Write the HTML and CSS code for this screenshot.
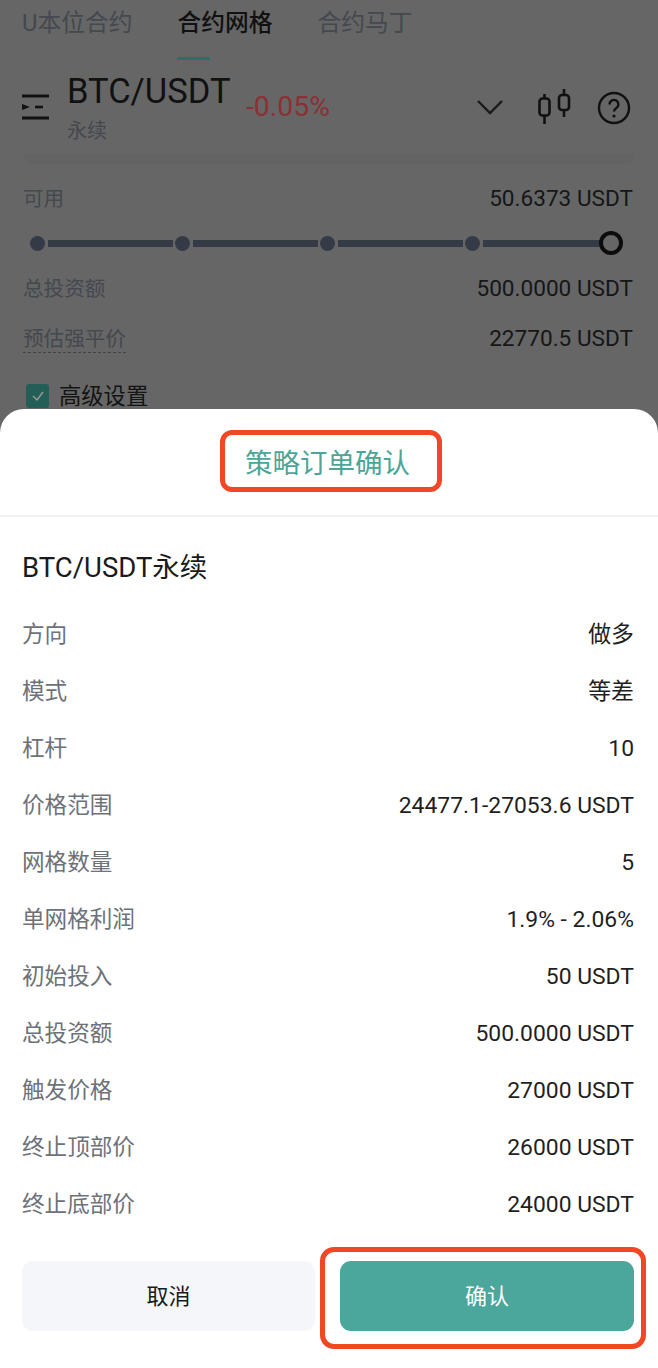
FILE: index.html
```html
<!DOCTYPE html>
<html lang="zh">
<head>
<meta charset="utf-8">
<title>策略订单确认</title>
<link rel="stylesheet" href="styles.css">
</head>
<body>
<div class="page">
  <nav class="tabs">
    <span class="tab">U本位合约</span>
    <span class="tab active">合约网格</span>
    <span class="tab">合约马丁</span>
  </nav>
  <header class="pair">
    <svg class="menu" width="28" height="28" viewBox="0 0 28 28"><path d="M0 2h27M0 24h27" stroke="#111" stroke-width="3"/><path d="M0 10l8 3-8 3z" fill="#111"/><path d="M13 13h8" stroke="#111" stroke-width="2.6"/></svg>
    <div class="pair-name">
      <div class="symbol">BTC/USDT</div>
      <div class="kind">永续</div>
    </div>
    <div class="change">-0.05%</div>
    <svg class="chev" width="28" height="16" viewBox="0 0 28 16"><path d="M2 2l12 12L26 2" fill="none" stroke="#1a1a1a" stroke-width="2.4"/></svg>
    <svg class="candle" width="34" height="36" viewBox="0 0 34 36"><g fill="none" stroke="#111" stroke-width="2.6"><rect x="1.5" y="9.5" width="10" height="17" rx="3"/><path d="M6.5 5v4M6.5 27v8"/><rect x="21" y="6" width="10" height="15" rx="3"/><path d="M26 0v6M26 21v7"/></g></svg>
    <svg class="help" width="34" height="34" viewBox="0 0 34 34"><circle cx="17" cy="17" r="15" fill="none" stroke="#111" stroke-width="2.4"/><path d="M12.6 13.4a4.4 4.4 0 1 1 6.8 3.6c-1.6 1.1-2.4 1.8-2.4 3.6" fill="none" stroke="#111" stroke-width="2.4"/><circle cx="17" cy="25" r="1.6" fill="#111"/></svg>
  </header>
  <div class="card-edge"></div>
  <section class="form">
    <div class="line first"><span class="muted">可用</span><span>50.6373 USDT</span></div>
    <div class="slider">
      <i class="dot"></i><i class="bar"></i><i class="dot"></i><i class="bar"></i><i class="dot"></i><i class="bar"></i><i class="dot"></i><i class="bar last"></i><i class="knob"></i>
    </div>
    <div class="line"><span class="muted">总投资额</span><span>500.0000 USDT</span></div>
    <div class="line"><span class="muted dashed">预估强平价</span><span>22770.5 USDT</span></div>
    <div class="adv">
      <span class="check"><svg width="14" height="12" viewBox="0 0 14 12"><path d="M2 6l4 4 6-8" fill="none" stroke="#9a9a9a" stroke-width="1.4"/></svg></span>
      <span>高级设置</span>
    </div>
  </section>

  <section class="sheet">
    <h1 class="sheet-title"><span class="mark mark-title">策略订单确认</span></h1>
    <div class="sheet-body">
      <h2 class="order">BTC/USDT永续</h2>
      <dl class="rows">
        <div class="row"><dt>方向</dt><dd>做多</dd></div>
        <div class="row"><dt>模式</dt><dd>等差</dd></div>
        <div class="row"><dt>杠杆</dt><dd>10</dd></div>
        <div class="row"><dt>价格范围</dt><dd>24477.1-27053.6 USDT</dd></div>
        <div class="row"><dt>网格数量</dt><dd>5</dd></div>
        <div class="row"><dt>单网格利润</dt><dd>1.9% - 2.06%</dd></div>
        <div class="row"><dt>初始投入</dt><dd>50 USDT</dd></div>
        <div class="row"><dt>总投资额</dt><dd>500.0000 USDT</dd></div>
        <div class="row"><dt>触发价格</dt><dd>27000 USDT</dd></div>
        <div class="row"><dt>终止顶部价</dt><dd>26000 USDT</dd></div>
        <div class="row"><dt>终止底部价</dt><dd>24000 USDT</dd></div>
      </dl>
      <div class="actions">
        <button class="btn cancel">取消</button>
        <span class="mark mark-btn"><button class="btn ok">确认</button></span>
      </div>
    </div>
  </section>
</div>
</body>
</html>
```
FILE: styles.css
```css
* { box-sizing: border-box; }
html, body { margin: 0; padding: 0; }
body {
  width: 658px;
  height: 1368px;
  overflow: hidden;
  background: #666;
  font-family: Roboto, "Noto Sans CJK SC", sans-serif;
  color: #141414;
}
.page { position: relative; width: 658px; height: 1368px; overflow: hidden; }

.tabs { display: flex; height: 60px; padding: 8px 0 0 22px; gap: 45px; font-size: 23.75px; line-height: 30px; color: #44484f; }
.tab { position: relative; }
.tab.active { color: #111; font-weight: 500; }
.tab.active::after { content: ""; position: absolute; left: 0; top: 49px; width: 33px; height: 3px; background: #2b6f65; }

.pair { display: flex; align-items: flex-start; height: 94px; padding: 0 27px 0 22px; }
.menu { margin-top: 34px; }
.pair-name { margin-left: 17px; margin-top: 12px; width: 179px; }
.symbol { font-size: 34.5px; line-height: 38px; color: #111; }
.kind { font-size: 20px; line-height: 28px; margin-top: 7px; color: #44484f; }
.change { font-size: 28.4px; line-height: 30px; margin-top: 32px; color: #8c3035; }
.chev { margin-left: 146px; margin-top: 39px; }
.candle { margin-left: 34px; margin-top: 29px; }
.help { margin-left: 25px; margin-top: 31px; }

.card-edge { height: 10px; margin: 0 23px 4px 23px; background: #636363; border-radius: 0 0 10px 10px; }

.form { padding: 0 25px 0 23px; font-size: 22.6px; color: #161616; }
.line { display: flex; justify-content: space-between; align-items: baseline; height: 30px; line-height: 30px; margin-bottom: 20px; }
.line.first { margin-top: 20px; margin-bottom: 16px; }
.muted { font-size: 20.6px; color: #44484f; }
.dashed { border-bottom: 1px dashed #3f4349; line-height: 26px; }
.slider { display: flex; align-items: center; height: 26px; margin: 0 10px 18px 7px; }
.dot { flex: none; width: 15px; height: 15px; border-radius: 50%; background: #343b47; }
.bar { flex: none; width: 125px; height: 7px; margin: 0 2px 0 3px; background: #343b47; }
.bar.last { flex: 1; width: auto; margin-right: -2px; }
.knob { flex: none; width: 24px; height: 24px; border-radius: 50%; border: 4px solid #0c0c0c; background: #666; }
.adv { display: flex; align-items: center; gap: 10px; margin-top: 27px; margin-left: 3px; font-size: 22.3px; line-height: 30px; color: #141414; }
.check { display: flex; align-items: center; justify-content: center; width: 23px; height: 24px; border-radius: 3px; background: #245f57; }

.sheet { position: absolute; left: 0; right: 0; top: 409px; bottom: 0; background: #fff; border-radius: 24px 24px 0 0; }
.sheet-title { margin: 0; height: 108px; display: flex; align-items: center; justify-content: center; border-bottom: 2px solid #f2f2f3; font-size: 27.5px; font-weight: 400; color: #4ba698; }
.mark { border: 5px solid #f14724; }
.mark-title { display: flex; align-items: center; justify-content: center; width: 222px; height: 62px; padding-right: 7px; border-radius: 12px; margin: -2px 0 0 4px; }
.sheet-body { padding: 0 24px 0 22px; }
.order { margin: 33px 0 20px; font-size: 27.5px; line-height: 36px; font-weight: 400; color: #1a1a1a; }
.rows { margin: 0; }
.row { display: flex; justify-content: space-between; align-items: baseline; height: 57px; line-height: 57px; font-size: 22.9px; }
.row dt { font-size: 22.6px; color: #6d7179; }
.row dd { margin: 0; color: #1f1f1f; }
.actions { display: flex; align-items: center; margin-top: 28px; }
.btn { display: block; border: 0; border-radius: 11px; font-family: inherit; font-size: 22px; height: 70px; padding: 0 0 4px; }
.cancel { width: 293px; background: #f5f6fa; color: #1a1a1a; }
.ok { width: 294px; background: #4ba69b; color: #fff; }
.mark-btn { flex: none; margin: -14px -12px -18px 5px; padding: 9px 7px 13px 15px; border-radius: 14px; width: 326px; height: 102px; }
```
